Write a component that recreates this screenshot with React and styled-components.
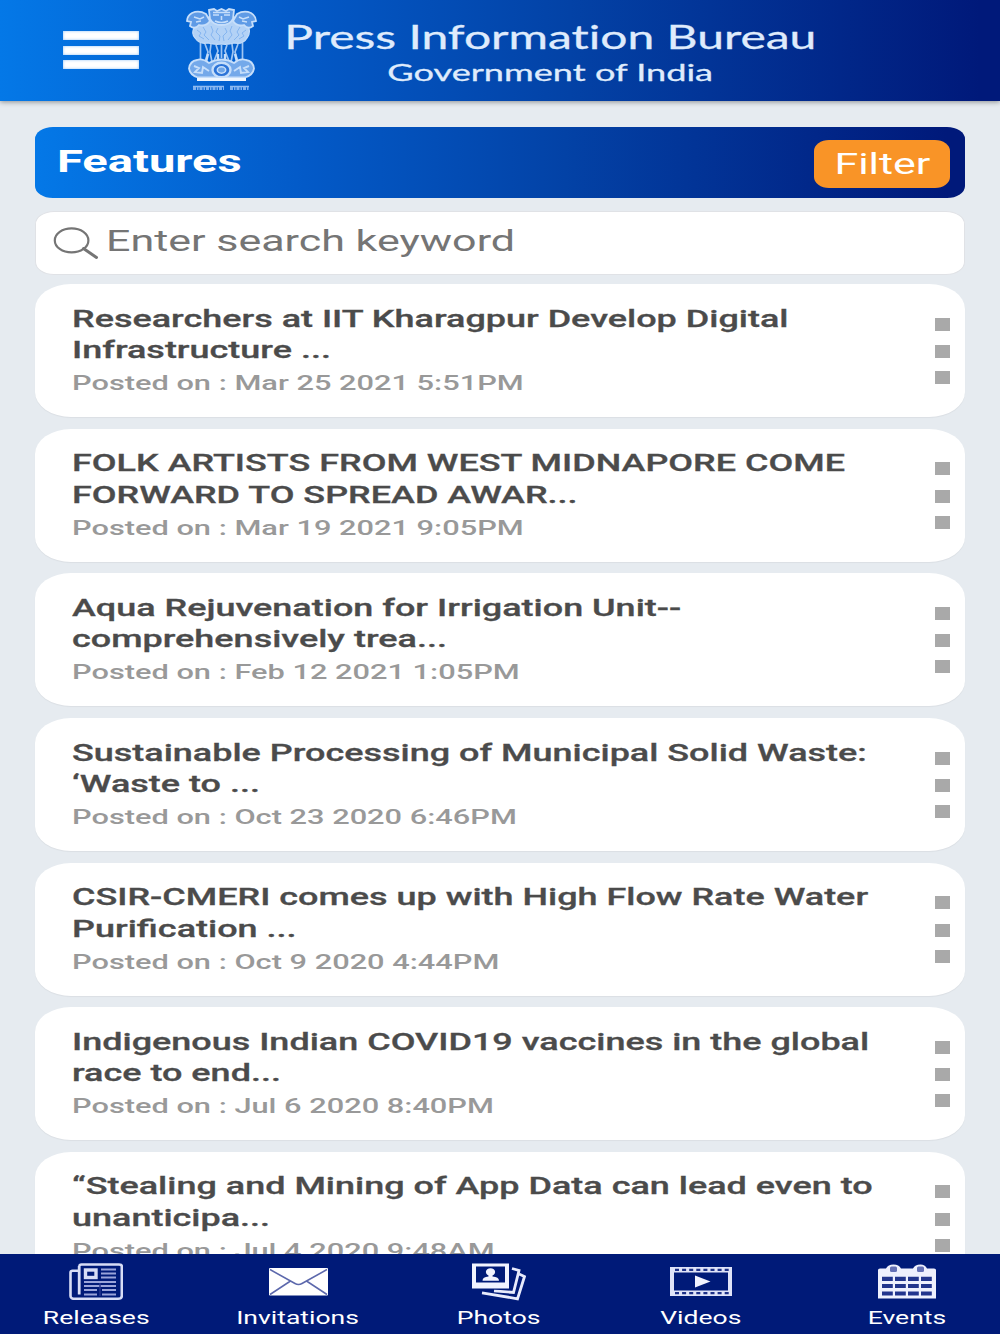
import React from 'react'
import styled, { createGlobalStyle } from 'styled-components'

const features = [
    { lines: ['Researchers at IIT Kharagpur Develop Digital', 'Infrastructure ...'], posted: 'Mar 25 2021 5:51PM' },
    { lines: ['FOLK ARTISTS FROM WEST MIDNAPORE COME', 'FORWARD TO SPREAD AWAR...'], posted: 'Mar 19 2021 9:05PM' },
    { lines: ['Aqua Rejuvenation for Irrigation Unit--', 'comprehensively trea...'], posted: 'Feb 12 2021 1:05PM' },
    { lines: ['Sustainable Processing of Municipal Solid Waste:', '‘Waste to ...'], posted: 'Oct 23 2020 6:46PM' },
    { lines: ['CSIR-CMERI comes up with High Flow Rate Water', 'Purification ...'], posted: 'Oct 9 2020 4:44PM' },
    { lines: ['Indigenous Indian COVID19 vaccines in the global', 'race to end...'], posted: 'Jul 6 2020 8:40PM' },
    { lines: ['“Stealing and Mining of App Data can lead even to', 'unanticipa...'], posted: 'Jul 4 2020 9:48AM' },
]

const Emblem = () => (
    <svg width="71" height="84" viewBox="0 0 71 84" fill="none" stroke="#c6defa">
        <path d="M8 20 Q5 25 9 30 Q14 37 22 35 Q29 37 35 36 Q42 37 48 35 Q57 37 61 30 Q66 24 61 15 L50 9 L22 9 L10 15Z" fill="#b3d2f6" strokeWidth="1.2" />
        <path d="M1 13 Q1 8 6 5 Q13 2 20 6 L24 13 Q20 19 13 17 Q9 22 4 18 L5 14Z M70 13 Q70 8 65 5 Q58 2 51 6 L47 13 Q51 19 58 17 Q62 22 67 18 L66 14Z" fill="#5f9be6" strokeWidth="1.8" />
        <path d="M23 2 L28 1 L31 3 L35.500 1 L40 3 L43 1 L48 2 L47 11 Q44 17 35.500 17 Q27 17 24 11Z" fill="#5f9be6" strokeWidth="1.8" />
        <path d="M27 7h6M38 7h6M35.500 8v4M29 13q6.500 3 13 0M27 4.500h17" strokeWidth="1.600" />
        <path d="M8 9l6 2 4-2M63 9l-6 2-4-2M10 14l5-1M61 14l-5-1" strokeWidth="1.500" />
        <path d="M11 22l4 3-2 3 5 3M17 19l3 5-2 3 5 5M25 18l2 5-2 4 4 5M32 20l-2 4 4 4-1 5M39 20l2 4-4 4 1 5M46 18l-2 5 2 4-4 5M54 19l-3 5 2 3-5 5M60 22l-4 3 2 3-5 3" stroke="#7fb1ee" strokeWidth="0.900" />
        <path d="M14.500 35v18M19 36l3 8-3 10M25 36l-1 8 2 10M30 37l2 6-4 10M35.500 37v13M41 37l-2 6 4 10M46 36l1 8-2 10M52 36l-3 8 3 10M56.500 35v18" strokeWidth="1.700" stroke="#9fc5f3" />
        <path d="M22 46l-2 8M32 46v6M39 46v6M49 46l2 8" strokeWidth="2.400" />
        <path d="M11 52 Q4 53 3 60.500 Q4 67 12 69.500 L59 69.500 Q67 67 68 60.500 Q67 53 60 52 Q54 50 48 55 Q36 48 23 55 Q16 50 11 52Z" strokeWidth="1.800" fill="#74a9ea" />
        <ellipse cx="35.5" cy="62" rx="9" ry="7.2" strokeWidth="2.4" fill="#2c74d8" />
        <ellipse cx="35.5" cy="62" rx="4.2" ry="3.2" strokeWidth="1.5" fill="#6fa6e8" />
        <path d="M8 58l5 2-4 4 7 1 1-6 6 4M63 58l-5 2 4 4-7 1-1-6-6 4" strokeWidth="1.900" />
        <path d="M11 71.500h49" strokeWidth="3" stroke="#eef6ff" />
        <path d="M7 78.500h31M44 78.500h19" strokeWidth="1.300" stroke="#8fbbf1" />
        <path d="M7 80.500h31M44 80.500h19" strokeWidth="3" strokeDasharray="3 1 1.500 1" stroke="#7fb0ee" />
    </svg>
)

const SearchIcon = () => (
    <svg width="46" height="33" viewBox="0 0 46 33" fill="none" stroke="#757575">
        <ellipse cx="18.6" cy="13.4" rx="16.8" ry="12" strokeWidth="2.2" />
        <path d="M30.5 21.500 L43.5 30.5" strokeWidth="3" strokeLinecap="round" />
    </svg>
)

const NewsIcon = () => (
    <svg width="54" height="38" viewBox="0 0 54 38" fill="none" stroke="#d8ddf6">
        <path d="M10.500 3 Q10.500 1.500 12.500 1.500 H50 Q52.800 1.500 52.800 3.500 V33 Q52.800 35.800 49 35.800 H6 Q1.500 35.800 1.500 33 V9.500 Q1.500 7.800 3.500 7.800 H9.500" strokeWidth="2.6" />
        <path d="M10.200 3V31.500" strokeWidth="2.800" />
        <rect x="16.5" y="7" width="10.500" height="7.500" strokeWidth="3.4" />
        <path d="M32 6.500h15M32 10.500h15M32 14.500h15M15 19h32M15 23h32M15 27h13M33 27h14M15 31.500h13M33 31.500h14" strokeWidth="2" stroke="#9aa4da" />
        <path d="M31 20v13" strokeWidth="1.500" stroke="#26368f" />
    </svg>
)

const MailIcon = () => (
    <svg width="59" height="28" viewBox="0 0 59 28" fill="none">
        <rect width="59" height="27.5" rx="1" fill="#fff" />
        <path d="M1 1.500 L26 15.500 Q29.500 17.500 33 15.500 L58 1.500 M1 26.500 L21.500 13 M58 26.500 L37.500 13" stroke="#5c68ac" strokeWidth="1.5" />
    </svg>
)

const PhotosIcon = () => (
    <svg width="54" height="38" viewBox="0 0 54 38" fill="none">
        <path d="M47 11 L52.500 13.500 L45.500 35.800 L10 29.800" stroke="#e8ebfc" strokeWidth="2.8" />
        <path d="M40 5.500 L47 7.500 L41.500 29.500 L22 27.800" stroke="#e8ebfc" strokeWidth="2.8" />
        <path d="M0 0.500 H38.500 V26.500 H0Z" fill="#001a78" />
        <path d="M0 0.500 H37 V25.500 H0Z M4 3.500 V19.500 H33 V3.500Z" fill="#f1f3ff" fillRule="evenodd" />
        <ellipse cx="18.5" cy="9" rx="4.6" ry="3.8" fill="#f1f3ff" />
        <path d="M16.500 11 H20.500 V13.500 Q27 14 27 17.800 H10.500 Q10.500 14 16.500 13.500Z" fill="#f1f3ff" />
    </svg>
)

const VideoIcon = () => (
    <svg width="62" height="29" viewBox="0 0 62 29" fill="none">
        <rect width="62" height="29" fill="#dfe3f8" />
        <rect x="4" y="5.5" width="54" height="18" fill="#001a78" />
        <path d="M5 2.800H59M5 26.200H59" stroke="#1c3088" strokeWidth="2.2" strokeDasharray="4 3.1" />
        <path d="M25 8.500 L40.500 14.500 L25 20.500Z" fill="#f1f3ff" />
    </svg>
)

const CalendarIcon = () => (
    <svg width="58" height="35" viewBox="0 0 58 35" fill="none">
        <path d="M0 6 Q0 4.500 2 4.500 H8 Q10 0.500 15.500 0.500 Q21 0.500 23 4.500 H35 Q37 0.500 42.500 0.500 Q47 0.500 49 4.500 H56 Q58 4.500 58 6 V34.500 H0Z" fill="#eef0fd" />
        <rect x="12" y="2.5" width="7" height="5.5" rx="1.5" fill="#6470b5" />
        <rect x="39" y="2.5" width="7" height="5.5" rx="1.5" fill="#6470b5" />
        <path d="M4 14.800H54M4 22H54M4 29.500H54" stroke="#22358d" strokeWidth="4.2" strokeDasharray="10.8 2.2" />
    </svg>
)

const tabs = [
    { label: 'Releases', icon: <NewsIcon /> },
    { label: 'Invitations', icon: <MailIcon /> },
    { label: 'Photos', icon: <PhotosIcon /> },
    { label: 'Videos', icon: <VideoIcon /> },
    { label: 'Events', icon: <CalendarIcon /> },
]

const App = () => {
    return (
        <Page>
            <GlobalStyle />
            <Header>
                <MenuButton aria-label="Menu"><span /><span /><span /></MenuButton>
                <Emblem />
                <Brand>
                    <BrandLine $size={32} $stretch={1.5}>Press Information Bureau</BrandLine>
                    <BrandLine $size={24} $stretch={1.505}>Government of India</BrandLine>
                </Brand>
            </Header>
            <Main>
                <TitleBar>
                    <Heading>Features</Heading>
                    <FilterButton><Wide $stretch={1.48} $origin="center">Filter</Wide></FilterButton>
                </TitleBar>
                <SearchBox>
                    <SearchIcon />
                    <Placeholder>Enter search keyword</Placeholder>
                </SearchBox>
                <List>
                    {features.map((item) => (
                        <Card key={item.posted}>
                            <CardText>
                                {item.lines.map((line) => <CardTitle key={line}>{line}</CardTitle>)}
                                <Posted>Posted on : {item.posted}</Posted>
                            </CardText>
                            <Dots><i /><i /><i /></Dots>
                        </Card>
                    ))}
                </List>
            </Main>
            <TabBar>
                {tabs.map((tab) => (
                    <Tab key={tab.label}>
                        <TabIcon>{tab.icon}</TabIcon>
                        <TabLabel>{tab.label}</TabLabel>
                    </Tab>
                ))}
            </TabBar>
        </Page>
    )
}

const GlobalStyle = createGlobalStyle`
*{
    box-sizing: border-box;
    margin: 0;
    padding: 0;
}
body{
    font-family: Roboto, "Liberation Sans", sans-serif;
    background: #e6ebf0;
    overflow: hidden;
}
`;

const Page = styled.div`
display: flex;
flex-direction: column;
height: 1334px;
overflow: hidden;
`;

// The type is expanded horizontally all through the app
const Wide = styled.span`
display: inline-block;
white-space: nowrap;
transform: scaleX(${(p) => p.$stretch});
transform-origin: ${(p) => p.$origin || 'left'} center;
`;

const Header = styled.header`
display: flex;
align-items: flex-start;
flex: none;
height: 101px;
padding: 8px 0 0 63px;
background: linear-gradient(90deg, #0478e7 0%, #035ac8 29%, #0342a6 57%, #00197a 98%);
box-shadow: 0 1px 5px rgba(0, 0, 0, 0.4);
z-index: 1;
`;

const MenuButton = styled.button`
display: flex;
flex-direction: column;
gap: 5.5px;
width: 76px;
margin: 23px 47px 0 0;
border: none;
background: none;
span{
    height: 9px;
    background: #fff;
    box-shadow: inset 0 0 3px #8fc0f5;
}
`;

const Brand = styled.div`
display: flex;
flex-direction: column;
align-items: center;
width: 528px;
margin: 9px 0 0 29px;
`;

const BrandLine = styled(Wide).attrs({ $origin: 'center' })`
font-family: Lato, sans-serif;
font-size: ${(p) => p.$size}px;
line-height: ${(p) => (p.$size > 30 ? 40 : 29)}px;
font-variant-ligatures: none;
-webkit-text-stroke: 0.3px #dfebfc;
color: #dfebfc;
`;

const Main = styled.main`
flex: 1;
min-height: 0;
overflow: hidden;
padding: 26px 35px 0;
`;

const TitleBar = styled.div`
display: flex;
justify-content: space-between;
align-items: flex-start;
height: 71px;
padding: 13px 15px 0 21.5px;
border-radius: 18px / 12px;
background: linear-gradient(90deg, #0478e7 0%, #035ac8 29%, #0342a6 57%, #00197a 98%);
`;

const Heading = styled.h1`
font-size: 31.5px;
line-height: 44px;
font-weight: 700;
color: #fff;
transform: scaleX(1.495);
transform-origin: left center;
`;

const FilterButton = styled.button`
width: 136px;
height: 48px;
border: none;
border-radius: 15px / 11px;
background: #f99427;
color: #fff;
font-family: inherit;
font-size: 29px;
line-height: 48px;
`;

const SearchBox = styled.div`
display: flex;
align-items: flex-start;
height: 64px;
margin-top: 13px;
padding: 15px 0 0 17px;
background: #fff;
border: 1px solid #e0e2e6;
border-radius: 19px / 13px;
`;

const Placeholder = styled(Wide).attrs({ $stretch: 1.457 })`
margin: -4px 0 0 6.5px;
font-size: 29.5px;
line-height: 36px;
color: #757575;
`;

const List = styled.div`
display: flex;
flex-direction: column;
gap: 11.65px;
margin-top: 9px;
`;

const Card = styled.article`
display: flex;
justify-content: space-between;
flex: none;
height: 133px;
padding: 18.6px 15px 0 36.5px;
background: #fff;
border-radius: 36px / 25px;
box-shadow: 0 1px 1px rgba(0, 0, 0, 0.05);
`;

const CardText = styled.div`
display: flex;
flex-direction: column;
align-items: flex-start;
`;

const CardTitle = styled(Wide).attrs({ as: 'h2', $stretch: 1.468 })`
font-size: 24.5px;
line-height: 31.5px;
font-weight: 500;
-webkit-text-stroke: 0.3px #4b4b4b;
color: #4b4b4b;
`;

const Posted = styled(Wide).attrs({ as: 'p', $stretch: 1.538 })`
margin-top: 5.4px;
font-size: 20px;
line-height: 24px;
font-weight: 500;
color: #999;
`;

const Dots = styled.div`
display: flex;
flex-direction: column;
padding-top: 15px;
i{
    width: 15px;
    height: 13px;
    margin-bottom: 13px;
    background: #a9a9a9;
}
i:first-child{
    margin-bottom: 14.5px;
}
`;

const TabBar = styled.nav`
display: grid;
grid-template-columns: 192px 212px 190px 214px 198px;
flex: none;
height: 80px;
background: #001a78;
z-index: 1;
`;

const Tab = styled.a`
display: flex;
flex-direction: column;
align-items: center;
padding-top: 9px;
`;

const TabIcon = styled.span`
display: flex;
align-items: center;
height: 37px;
`;

const TabLabel = styled(Wide).attrs({ $stretch: 1.515, $origin: 'center' })`
margin-top: 6.5px;
font-size: 17.5px;
line-height: 22px;
color: #fff;
`;

export default App;
